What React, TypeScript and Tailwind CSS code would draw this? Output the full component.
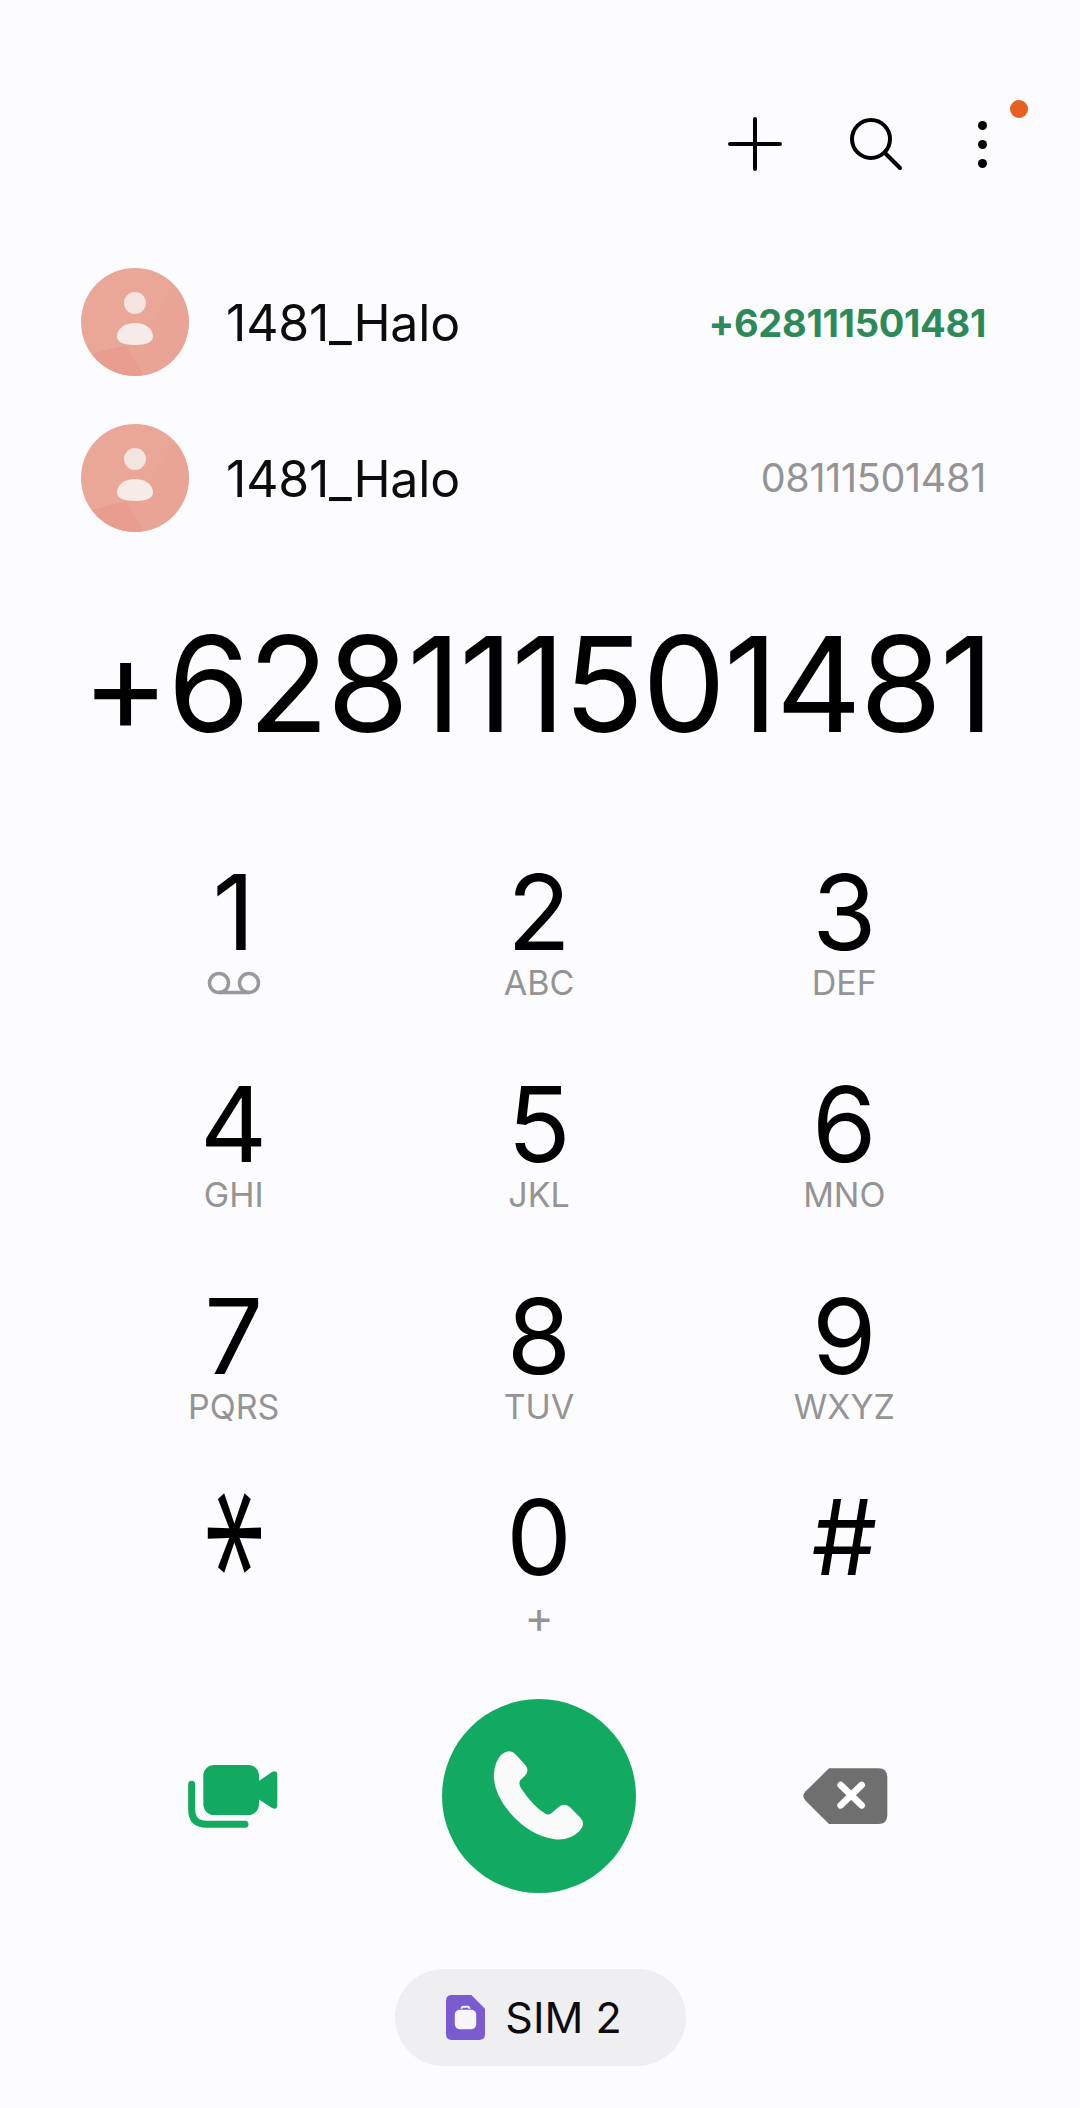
const keys = [
  { digit: '1', label: '' },
  { digit: '2', label: 'ABC' },
  { digit: '3', label: 'DEF' },
  { digit: '4', label: 'GHI' },
  { digit: '5', label: 'JKL' },
  { digit: '6', label: 'MNO' },
  { digit: '7', label: 'PQRS' },
  { digit: '8', label: 'TUV' },
  { digit: '9', label: 'WXYZ' },
];

function Avatar() {
  return (
    <svg width="108" height="108" viewBox="0 0 108 108" className="shrink-0">
      <circle cx="54" cy="54" r="54" fill="#eaa697" />
      <path d="M92 16A54 54 0 0 1 54 108A54 54 0 0 1 11 86Q40 78 48 76Q72 60 92 16Z" fill="#e9a495" />
      <path d="M11 86Q30 80 46 78L62 107A54 54 0 0 1 11 86Z" fill="#e89d8e" />
      <circle cx="54" cy="35" r="11" fill="#f4e4df" />
      <path d="M36 69C36 60 44 55 54 55C64 55 72 60 72 69C72 74 65 77 54 77C43 77 36 74 36 69Z" fill="#f6ebe7" />
    </svg>
  );
}

function ContactRow({ number, green }: { number: string; green?: boolean }) {
  return (
    <div className="flex items-center h-[108px]">
      <Avatar />
      <span className="ml-[37px] pt-[2px] text-[50px] tracking-[-0.2px] text-[#0c0c0c]">1481_Halo</span>
      {green ? (
        <span className="ml-auto pt-[2px] text-[38px] font-bold tracking-[-0.3px] text-[#2b8a57]">{number}</span>
      ) : (
        <span className="ml-auto pt-[2px] text-[39.5px] tracking-[-0.3px] text-[#949494]">{number}</span>
      )}
    </div>
  );
}

function Voicemail() {
  return (
    <svg width="54" height="26" viewBox="0 0 54 26" fill="none" stroke="#999999" strokeWidth="3.5">
      <circle cx="12" cy="13" r="9.5" />
      <circle cx="42" cy="13" r="9.5" />
      <path d="M12 22.5H42" />
    </svg>
  );
}

export default function App() {
  return (
    <div className="w-[1080px] h-[2108px] bg-[#fcfcfe] font-['Inter',sans-serif] flex flex-col">
      {/* top actions */}
      <div className="flex justify-end items-center h-[100px] mt-[94px] pr-[93px]">
        <svg width="60" height="60" viewBox="0 0 60 60" fill="none" stroke="#000" strokeWidth="4" strokeLinecap="round" className="mr-[63px]">
          <path d="M30 5V55M5 30H55" />
        </svg>
        <svg width="56" height="56" viewBox="0 0 56 56" fill="none" stroke="#000" strokeWidth="4" strokeLinecap="round" className="mr-[73px]">
          <circle cx="23" cy="23" r="19" />
          <path d="M37 37L52 52" />
        </svg>
        <div className="relative w-[10px] h-[47px] flex flex-col justify-between items-center">
          <span className="w-[9px] h-[9px] rounded-full bg-black" />
          <span className="w-[9px] h-[9px] rounded-full bg-black" />
          <span className="w-[9px] h-[9px] rounded-full bg-black" />
          <span className="absolute left-[33px] top-[-21px] w-[18px] h-[18px] rounded-full bg-[#e6601f]" />
        </div>
      </div>

      {/* matched contacts */}
      <div className="flex flex-col gap-[48px] mt-[74px] pl-[81px] pr-[94px]">
        <ContactRow number="+628111501481" green />
        <ContactRow number="08111501481" />
      </div>

      {/* typed number */}
      <div className="mt-[77px] h-[150px] pr-[6px] flex items-center justify-center text-[132.5px] leading-none tracking-[-1.8px] text-black">
        +628111501481
      </div>

      {/* keypad */}
      <div className="grid grid-cols-3 grid-rows-[212px_212px_201px_auto] w-[916px] ml-[81px] mt-[101px]">
        {keys.map((k) => (
          <div key={k.digit} className="flex flex-col items-center">
            <span className="h-[104px] text-[104px] leading-[104px] text-black">{k.digit}</span>
            <span className="h-[38px] flex items-center text-[34px] leading-[38px] text-[#949494]">
              {k.label || <Voicemail />}
            </span>
          </div>
        ))}
        <div className="flex flex-col items-center">
          <span className="h-[104px] text-[104px] leading-[104px] font-light text-black [transform:translate(-21px,-4px)_scale(1.25,2)_rotate(90deg)]">*</span>
        </div>
        <div className="flex flex-col items-center">
          <span className="h-[104px] text-[104px] leading-[104px] text-black">0</span>
          <span className="h-[40px] mt-[8px] flex items-center text-[44px] leading-[40px] text-[#949494]">+</span>
        </div>
        <div className="flex flex-col items-center">
          <span className="h-[104px] text-[104px] leading-[104px] text-black">#</span>
        </div>
      </div>

      {/* call actions */}
      <div className="grid grid-cols-3 w-[916px] ml-[81px] items-center mt-[62px]">
        <div className="flex justify-center">
          <svg width="130" height="110" viewBox="0 0 390 330">
            <rect x="103" y="72" width="167" height="150" rx="32" fill="#12aa60" />
            <path d="M262 125L308 94Q325 84 325 104L325 190Q325 210 308 200L262 170Z" fill="#12aa60" />
            <path d="M68 130V205Q68 250 112 250H228" fill="none" stroke="#12aa60" strokeWidth="21" strokeLinecap="round" />
          </svg>
        </div>
        <div className="flex justify-center">
          <div className="w-[194px] h-[194px] rounded-full bg-[#12aa60] flex items-center justify-center">
            <svg width="194" height="194" viewBox="36 28 584 584">
              <path
                d="M215 195Q240 175 258 195L288 228Q300 245 285 260L272 272Q265 282 275 298Q310 350 345 372Q358 380 368 370L388 352Q405 340 420 352L452 385Q470 405 450 425Q420 455 375 450Q300 440 240 370Q190 310 192 255Q195 215 215 195Z"
                fill="#fafafa"
              />
            </svg>
          </div>
        </div>
        <div className="flex justify-center">
          <svg width="120" height="100" viewBox="0 0 360 300" className="mr-[10px] mt-[8px]">
            <path d="M150 55H298Q325 55 325 82V195Q325 222 298 222H150L80 152Q66 138 80 124Z" fill="#6f6f6f" />
            <path d="M185 105L248 166M248 105L185 166" fill="none" stroke="#fff" strokeWidth="20" strokeLinecap="round" />
          </svg>
        </div>
      </div>

      {/* sim selector */}
      <div className="flex justify-center mt-[76px]">
        <div className="w-[291px] h-[97px] pr-[12px] rounded-full bg-[#efeff2] flex items-center justify-center gap-[20px]">
          <svg width="39" height="45" viewBox="0 0 40 46">
            <path d="M6 0H26L40 14V40Q40 46 34 46H6Q0 46 0 40V6Q0 0 6 0Z" fill="#7a5bd0" />
            <rect x="9" y="15" width="22" height="20" rx="5" fill="#f8f6fc" />
            <path d="M16 14Q16 12 18 12H22Q24 12 24 14" fill="none" stroke="#f8f6fc" strokeWidth="2" />
          </svg>
          <span className="text-[43px] text-[#0c0c0c]">SIM 2</span>
        </div>
      </div>
    </div>
  );
}
